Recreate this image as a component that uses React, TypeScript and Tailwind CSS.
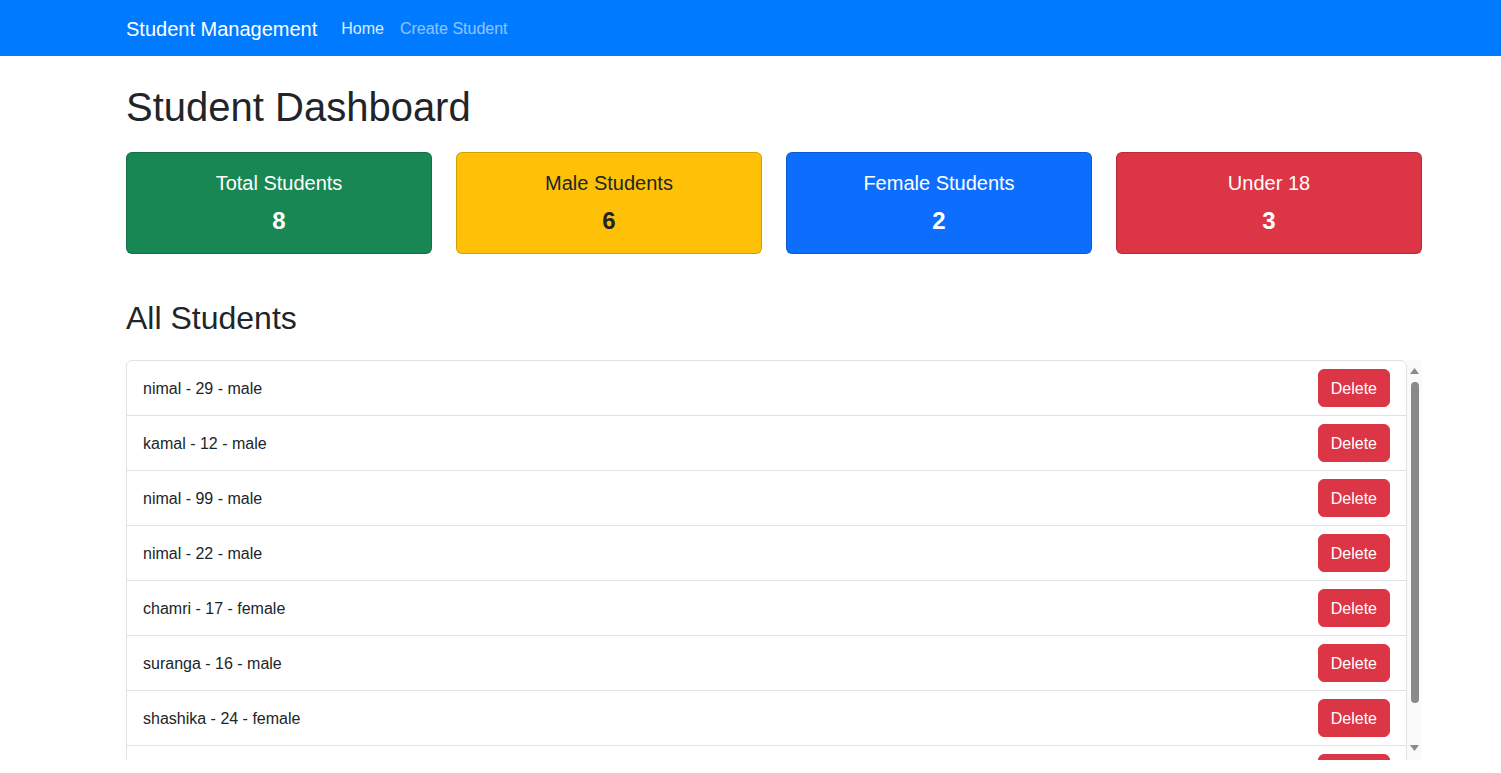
import React, { useState } from "react";

interface Student {
  id: number;
  name: string;
  age: number;
  gender: "male" | "female";
}

const initialStudents: Student[] = [
  { id: 1, name: "nimal", age: 29, gender: "male" },
  { id: 2, name: "kamal", age: 12, gender: "male" },
  { id: 3, name: "nimal", age: 99, gender: "male" },
  { id: 4, name: "nimal", age: 22, gender: "male" },
  { id: 5, name: "chamri", age: 17, gender: "female" },
  { id: 6, name: "suranga", age: 16, gender: "male" },
  { id: 7, name: "shashika", age: 24, gender: "female" },
  { id: 8, name: "sunil", age: 31, gender: "male" },
];

const StatCard: React.FC<{ title: string; value: number; className: string }> = ({
  title,
  value,
  className,
}) => (
  <div
    className={`rounded-md border border-[rgba(0,0,0,0.175)] pt-[18px] pb-[18px] text-center ${className}`}
  >
    <h5 className="text-[20px] leading-[24px] font-medium">{title}</h5>
    <h4 className="mt-3 text-[24px] leading-[28px] font-bold">{value}</h4>
  </div>
);

// the page's own scrollbar look (windows style), drawn beside the list
const FakeScrollbar: React.FC = () => (
  <div className="flex w-[15px] shrink-0 flex-col items-center bg-[#fafafa]">
    <svg viewBox="0 0 9 6" className="mt-[8px] block h-[6px] w-[9px] shrink-0">
      <path d="M4.5 0 L9 6 L0 6 Z" fill="#8a8a8a" />
    </svg>
    <div className="mt-[8px] h-[321px] w-[8px] shrink-0 rounded-full bg-[#8a8a8a]" />
    <svg viewBox="0 0 9 6" className="mt-auto mb-[9px] block h-[6px] w-[9px] shrink-0">
      <path d="M0 0 L9 0 L4.5 6 Z" fill="#8a8a8a" />
    </svg>
  </div>
);

const App: React.FC = () => {
  const [students, setStudents] = useState<Student[]>(initialStudents);

  const handleDelete = (id: number) => {
    setStudents((prev) => prev.filter((s) => s.id !== id));
  };

  const total = students.length;
  const male = students.filter((s) => s.gender === "male").length;
  const female = students.filter((s) => s.gender === "female").length;
  const under18 = students.filter((s) => s.age < 18).length;

  return (
    <div className="min-h-screen bg-white text-[#212529] font-['Segoe_UI','Liberation_Sans',sans-serif]">
      {/* navbar */}
      <nav className="h-[56px] bg-[#007bff]">
        <div className="ml-[126px] flex h-full w-[1296px] items-center pt-[2px]">
          <a href="#" className="text-[20px] leading-[30px] text-white">
            Student Management
          </a>
          <ul className="ml-4 flex">
            <li>
              <a href="#" className="block px-2 text-[16px] leading-[24px] text-white/85">
                Home
              </a>
            </li>
            <li>
              <a href="#" className="block px-2 text-[16px] leading-[24px] text-white/55">
                Create Student
              </a>
            </li>
          </ul>
        </div>
      </nav>

      <main className="ml-[126px] w-[1296px]">
        <h1 className="mt-[27px] text-[40px] leading-[48px] font-medium">Student Dashboard</h1>

        <div className="mt-[21px] grid grid-cols-4 gap-6">
          <StatCard title="Total Students" value={total} className="bg-[#198754] text-white" />
          <StatCard title="Male Students" value={male} className="bg-[#ffc107] text-[#212529]" />
          <StatCard title="Female Students" value={female} className="bg-[#0d6efd] text-white" />
          <StatCard title="Under 18" value={under18} className="bg-[#dc3545] text-white" />
        </div>

        <h2 className="mt-[45px] text-[32px] leading-[38px] font-medium">All Students</h2>

        <div className="mt-[23px] flex h-[400px]">
          <div className="min-w-0 flex-1 overflow-y-auto [scrollbar-width:none]">
            <ul className="divide-y divide-[#dee2e6] rounded-md border border-[#dee2e6]">
              {students.map((s) => (
                <li key={s.id} className="flex items-center justify-between px-4 py-2">
                  <span className="pt-[2px] text-[16px] leading-[24px]">
                    {s.name} - {s.age} - {s.gender}
                  </span>
                  <button
                    onClick={() => handleDelete(s.id)}
                    className="rounded-md border border-[#dc3545] bg-[#dc3545] px-3 pt-[7px] pb-[5px] text-[16px] leading-[24px] text-white"
                  >
                    Delete
                  </button>
                </li>
              ))}
            </ul>
          </div>
          <FakeScrollbar />
        </div>
      </main>
    </div>
  );
};

export default App;
